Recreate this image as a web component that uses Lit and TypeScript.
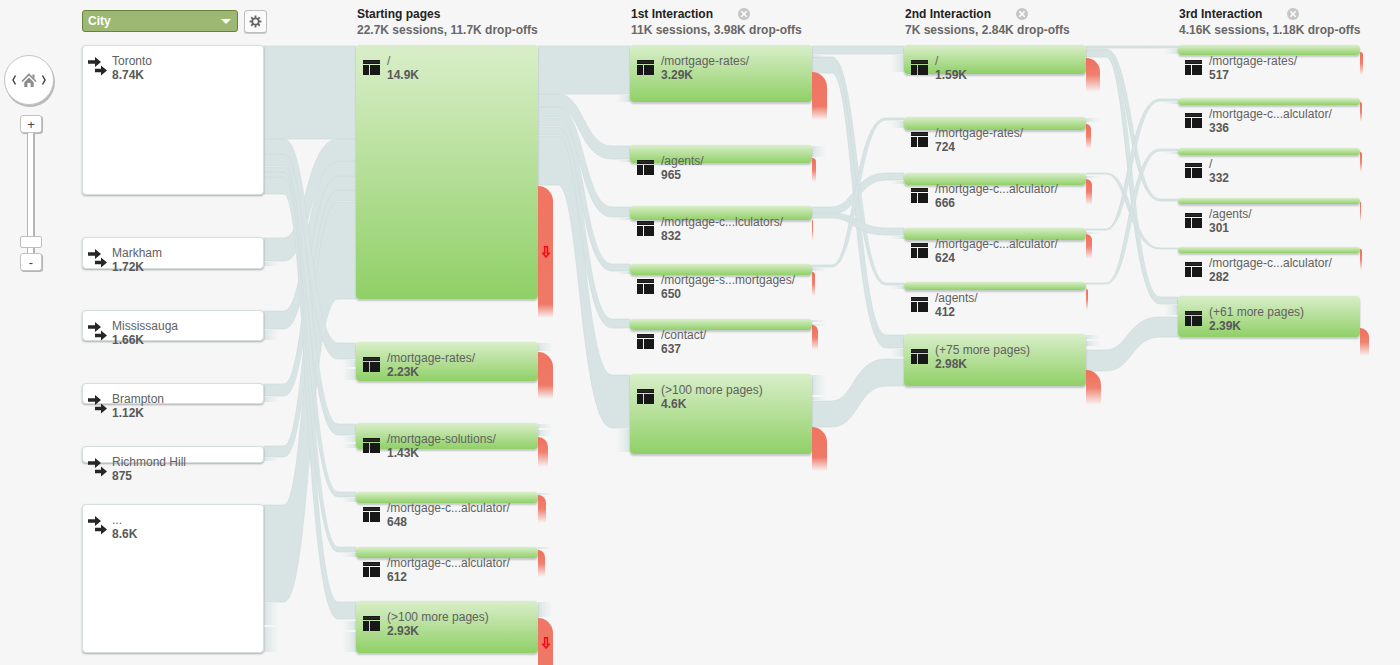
import { LitElement, html, css, svg } from "lit";
import { customElement, property } from "lit/decorators.js";
import { classMap } from "lit/directives/class-map.js";
import { styleMap } from "lit/directives/style-map.js";

interface FlowNode {
  label: string;
  value: string;
  top: number;
  height: number;
  /** Drop-off tail: [top, height, width], on the canvas scale. */
  drop?: [number, number, number];
  marked?: boolean;
  /** The tail runs on past the bottom of the canvas. */
  cut?: boolean;
}

interface Step {
  title: string;
  summary: string;
  removable: boolean;
  nodes: FlowNode[];
}

/** [source column, y and thickness at the source, y and thickness at the target] */
type Link = [number, number, number, number, number];

const COLUMN_WIDTH = 182;
const COLUMN_PITCH = 274;

const CITIES: FlowNode[] = [
  { label: "Toronto", value: "8.74K", top: 0, height: 150 },
  { label: "Markham", value: "1.72K", top: 192, height: 32 },
  { label: "Mississauga", value: "1.66K", top: 265, height: 31 },
  { label: "Brampton", value: "1.12K", top: 338, height: 21 },
  { label: "Richmond Hill", value: "875", top: 401, height: 17 },
  { label: "...", value: "8.6K", top: 459, height: 149 },
];

const STEPS: Step[] = [
  {
    title: "Starting pages",
    summary: "22.7K sessions, 11.7K drop-offs",
    removable: false,
    nodes: [
      { label: "/", value: "14.9K", top: 0, height: 254, drop: [141, 132, 15], marked: true },
      { label: "/mortgage-rates/", value: "2.23K", top: 297, height: 39, drop: [307, 47, 15] },
      { label: "/mortgage-solutions/", value: "1.43K", top: 378, height: 26, drop: [392, 30, 10] },
      { label: "/mortgage-c...alculator/", value: "648", top: 447, height: 11, drop: [450, 28, 8] },
      { label: "/mortgage-c...alculator/", value: "612", top: 502, height: 11, drop: [505, 27, 7] },
      { label: "(>100 more pages)", value: "2.93K", top: 556, height: 52, drop: [573, 49, 15], marked: true, cut: true },
    ],
  },
  {
    title: "1st Interaction",
    summary: "11K sessions, 3.98K drop-offs",
    removable: true,
    nodes: [
      { label: "/mortgage-rates/", value: "3.29K", top: 0, height: 57, drop: [27, 48, 15] },
      { label: "/agents/", value: "965", top: 100, height: 18, drop: [113, 24, 4] },
      { label: "/mortgage-c...lculators/", value: "832", top: 161, height: 14, drop: [175, 21, 1] },
      { label: "/mortgage-s...mortgages/", value: "650", top: 219, height: 11, drop: [227, 24, 3] },
      { label: "/contact/", value: "637", top: 274, height: 11, drop: [280, 25, 6] },
      { label: "(>100 more pages)", value: "4.6K", top: 329, height: 80, drop: [382, 44, 15] },
    ],
  },
  {
    title: "2nd Interaction",
    summary: "7K sessions, 2.84K drop-offs",
    removable: true,
    nodes: [
      { label: "/", value: "1.59K", top: 0, height: 29, drop: [13, 34, 14] },
      { label: "/mortgage-rates/", value: "724", top: 72, height: 13, drop: [79, 25, 5] },
      { label: "/mortgage-c...alculator/", value: "666", top: 128, height: 12, drop: [134, 26, 6] },
      { label: "/mortgage-c...alculator/", value: "624", top: 183, height: 12, drop: [189, 25, 6] },
      { label: "/agents/", value: "412", top: 237, height: 8, drop: [244, 21, 2] },
      { label: "(+75 more pages)", value: "2.98K", top: 289, height: 52, drop: [325, 35, 15] },
    ],
  },
  {
    title: "3rd Interaction",
    summary: "4.16K sessions, 1.18K drop-offs",
    removable: true,
    nodes: [
      { label: "/mortgage-rates/", value: "517", top: 0, height: 10, drop: [7, 23, 3] },
      { label: "/mortgage-c...alculator/", value: "336", top: 53, height: 7, drop: [57, 20, 2] },
      { label: "/", value: "332", top: 103, height: 7, drop: [107, 20, 2] },
      { label: "/agents/", value: "301", top: 153, height: 6, drop: [157, 20, 1] },
      { label: "/mortgage-c...alculator/", value: "282", top: 202, height: 6, drop: [204, 21, 2] },
      { label: "(+61 more pages)", value: "2.39K", top: 251, height: 41, drop: [283, 28, 9] },
    ],
  },
];

const LINKS: Link[] = [
  [0, 460, 97, 157, 97],
  [0, 401, 11, 145, 11],
  [0, 339, 12, 131, 14],
  [0, 266, 18, 116, 15],
  [0, 193, 23, 94, 22],
  [0, 132, 17, 557, 17],
  [0, 127, 5, 502, 5],
  [0, 122, 5, 447, 5],
  [0, 109, 12, 379, 11],
  [0, 94, 15, 298, 16],
  [0, 1, 93, 1, 93],
  [1, 91, 49, 330, 53],
  [1, 82, 8, 274, 9],
  [1, 73, 8, 219, 7],
  [1, 62, 10, 162, 10],
  [1, 49, 13, 101, 13],
  [1, 1, 48, 1, 48],
  [2, 15, 13, 290, 13],
  [2, 12, 2, 238, 2],
  [2, 1, 8, 1, 8],
  [2, 162, 7, 128, 7],
  [2, 168, 5, 183, 7],
  [2, 220, 2, 73, 2],
  [2, 356, 26, 314, 27],
  [3, 5, 7, 252, 7],
  [3, 4, 2, 154, 2],
  [3, 1, 2, 1, 2],
  [3, 128, 1, 203, 1],
  [3, 184, 1, 54, 2],
  [3, 238, 1, 104, 2],
  [3, 305, 21, 272, 20],
];

/** Stubs of traffic that leaves a column: [column, y, height]. */
const OUT_STUBS: [number, number, number][] = [
  [0, 217, 4], [0, 285, 10], [0, 352, 5], [0, 413, 3], [0, 558, 22], [0, 582, 25],
  [1, 298, 8], [1, 379, 4], [1, 385, 6], [1, 448, 2], [1, 502, 2], [1, 557, 15],
  [2, 10, 3], [2, 101, 11], [2, 223, 3], [2, 275, 2], [2, 279, 2], [2, 330, 20], [2, 352, 3],
  [3, 73, 4], [3, 131, 2], [3, 187, 2], [3, 290, 4], [3, 296, 5],
];

/** Stubs of traffic that arrives at a column: [column, y, height]. */
const IN_STUBS: [number, number, number][] = [
  [1, 315, 7], [1, 324, 11], [1, 391, 6], [1, 399, 4], [1, 453, 4], [1, 508, 4], [1, 576, 9], [1, 587, 20],
  [2, 50, 7], [2, 115, 2], [2, 173, 2], [2, 227, 2], [2, 384, 23],
  [3, 10, 17], [3, 76, 7], [3, 136, 3], [3, 191, 3], [3, 241, 3], [3, 304, 8],
  [4, 4, 5], [4, 57, 2], [4, 107, 2], [4, 260, 10],
];

const bandPath = ([column, y0, h0, y1, h1]: Link) => {
  const from = column * COLUMN_PITCH + COLUMN_WIDTH;
  const to = (column + 1) * COLUMN_PITCH;
  const a = from + 20;
  const b = to - 18;
  // The inner edge of a bend turns earlier than the outer one, which keeps the band wide on its slope.
  const down = y1 > y0;
  const upper = a + (b - a) * (down ? 0.48 : 0.4);
  const lower = a + (b - a) * (down ? 0.4 : 0.48);
  return (
    `M${from} ${y0}H${a}C${upper} ${y0} ${upper} ${y1} ${b} ${y1}H${to}` +
    `V${y1 + h1}H${b}C${lower} ${y1 + h1} ${lower} ${y0 + h0} ${a} ${y0 + h0}H${from}Z`
  );
};

@customElement("flow-links")
class FlowLinks extends LitElement {
  static styles = css`
    :host {
      display: block;
    }
    .links {
      display: block;
      overflow: visible;
    }
    .band {
      fill: #d8e4e4;
      stroke: #cedddc;
      stroke-opacity: 0.7;
      stroke-width: 1;
    }
  `;

  render() {
    return html`
      <svg class="links" width="1278" height="620" viewBox="0 0 1278 620" aria-hidden="true">
        <defs>
          <linearGradient id="leave">
            <stop offset="0" stop-color="#c9dbdb" stop-opacity="0.7" />
            <stop offset="1" stop-color="#d8e4e4" stop-opacity="0" />
          </linearGradient>
          <linearGradient id="arrive">
            <stop offset="0" stop-color="#d8e4e4" stop-opacity="0" />
            <stop offset="1" stop-color="#c9dbdb" stop-opacity="0.7" />
          </linearGradient>
        </defs>
        ${LINKS.map((link) => svg`<path class="band" d=${bandPath(link)} />`)}
        ${OUT_STUBS.map(
          ([c, y, h]) => svg`<rect x=${c * COLUMN_PITCH + COLUMN_WIDTH} y=${y} width="15" height=${h} fill="url(#leave)" />`
        )}
        ${IN_STUBS.map(
          ([c, y, h]) => svg`<rect x=${c * COLUMN_PITCH - 14} y=${y} width="14" height=${h} fill="url(#arrive)" />`
        )}
      </svg>
    `;
  }
}

@customElement("flow-column")
class FlowColumn extends LitElement {
  @property({ attribute: false }) nodes: FlowNode[] = [];
  @property() kind: "source" | "page" = "page";

  static styles = css`
    :host {
      display: block;
      position: relative;
    }
    .node {
      position: absolute;
      left: 0;
      width: 100%;
      box-sizing: border-box;
      border-radius: 4px;
    }
    .page {
      background: linear-gradient(#d9eec9, #90d067);
      box-shadow: 0 0 1px #c3d6cb, 0 2px 2px rgba(60, 80, 70, 0.28);
    }
    .source {
      border: 1px solid #d6dfde;
      background: #fff;
      box-shadow: 0 1px 2px rgba(0, 0, 0, 0.3);
    }
    .content {
      display: flex;
      gap: 7px;
      padding: 9px 0 0 7px;
      white-space: nowrap;
    }
    .source .content {
      gap: 5px;
      padding: 8px 0 0 4px;
    }
    .icon {
      flex: none;
      width: 17px;
      height: 15px;
      padding-top: 6px;
    }
    .source .icon {
      width: 20px;
      height: 20px;
      padding-top: 3px;
    }
    .text {
      font-size: 12px;
      line-height: 14px;
      color: #616161;
    }
    .value {
      display: block;
      color: #595959;
    }
    .drop {
      position: absolute;
      left: 100%;
      display: flex;
      align-items: center;
      justify-content: center;
      background: linear-gradient(#f07562, #ef7866 calc(100% - 14px), rgba(240, 120, 102, 0));
    }
    .faded {
      background: linear-gradient(#ee6f5c, #f1806f 50%, rgba(240, 120, 102, 0));
    }
    .cut {
      background: #ef7765;
    }
    .arrow {
      width: 8px;
      height: 12px;
      flex: none;
    }
  `;

  private icon() {
    return this.kind === "source"
      ? html`<svg class="icon" viewBox="0 0 20 20" fill="#262626" aria-hidden="true">
          <path d="M1 3.300h7V0l6 5-6 5V6.700H1zM8 11.800h6V8.500l6 5-6 5v-3.300H8z" />
        </svg>`
      : html`<svg class="icon" viewBox="0 0 17 15" fill="#181818" aria-hidden="true">
          <path d="M0 0h17v4H0zM0 5h6v10H0zM7 5h10v10H7z" />
          <path d="M0 2h17" stroke="#4a4a4a" stroke-width=".6" />
        </svg>`;
  }

  private tail(node: FlowNode) {
    if (!node.drop) return null;
    const [top, height, width] = node.drop;
    return html`<div
      class=${classMap({ drop: true, faded: height < 40, cut: !!node.cut })}
      style=${styleMap({
        top: `${top - node.top}px`,
        height: `${height}px`,
        width: `${width}px`,
        borderTopRightRadius: `${width}px`,
      })}
    >
      ${node.marked
        ? html`<svg class="arrow" viewBox="0 0 8 12" fill="none" stroke="#f40b12" stroke-width="1.500" aria-hidden="true">
            <path d="M2.600.8h2.800v6.400H7.200L4 11 .8 7.200h1.800z" />
          </svg>`
        : null}
    </div>`;
  }

  render() {
    return this.nodes.map(
      (node) => html`<div
        class=${classMap({ node: true, [this.kind]: true })}
        style=${styleMap({ top: `${node.top}px`, height: `${node.height}px` })}
      >
        <div class="content">
          ${this.icon()}
          <div class="text">${node.label}<b class="value">${node.value}</b></div>
        </div>
        ${this.tail(node)}
      </div>`
    );
  }
}

@customElement("flow-navigator")
class FlowNavigator extends LitElement {
  static styles = css`
    :host {
      display: flex;
      flex-direction: column;
      align-items: center;
      gap: 10px;
    }
    button {
      margin: 0;
      padding: 0;
      border: 0;
      background: none;
      color: #444;
      font: inherit;
    }
    .pan {
      display: flex;
      align-items: center;
      justify-content: center;
      gap: 4px;
      width: 50px;
      height: 50px;
      box-sizing: border-box;
      border: 1px solid #c4c4c4;
      border-radius: 50%;
      background: #fff;
      box-shadow: 1px 2px 0 #b9b9b9;
    }
    .side {
      width: 6px;
      height: 12px;
    }
    .home {
      width: 16px;
      height: 16px;
    }
    svg {
      display: block;
      width: 100%;
      height: 100%;
    }
    .zoom {
      display: flex;
      flex-direction: column;
      align-items: center;
      padding-left: 4px;
    }
    .key {
      width: 22px;
      height: 18px;
      box-sizing: border-box;
      border: 1px solid #c2c2c2;
      border-radius: 3px;
      background: #fff;
      box-shadow: 1px 1px 0 #b5b5b5;
      font-size: 13px;
      line-height: 15px;
    }
    .level {
      appearance: none;
      writing-mode: vertical-lr;
      direction: rtl;
      width: 22px;
      height: 120px;
      margin: 0;
      background: none;
    }
    .level::-webkit-slider-runnable-track {
      width: 8px;
      height: 100%;
      box-sizing: border-box;
      border: solid #b4b4b4;
      border-width: 0 2px 0 1px;
      background: #fff;
    }
    .level::-webkit-slider-thumb {
      appearance: none;
      width: 22px;
      height: 12px;
      margin-left: -8px;
      box-sizing: border-box;
      border: 1px solid #bdbdbd;
      border-radius: 2px;
      background: #fff;
    }
  `;

  render() {
    return html`
      <nav class="pan" aria-label="Pan">
        <button class="side" aria-label="Previous">
          <svg viewBox="0 0 6 12" fill="none" stroke="#444" stroke-width="1.500"><path d="M4.500 1.500 2 6l2.500 4.500" /></svg>
        </button>
        <button class="home" aria-label="Home">
          <svg viewBox="0 0 16 16" fill="none">
            <path d="M1 9.500 8 2.500l7 7" stroke="#8c8c8c" stroke-width="1.600" />
            <path d="M11.500 2.500h2v4.300l-2-2z" fill="#8c8c8c" />
            <path d="M3.300 10.200 8 5.500l4.700 4.700V15H9.600v-4H6.400v4H3.300z" fill="#8c8c8c" />
          </svg>
        </button>
        <button class="side" aria-label="Next">
          <svg viewBox="0 0 6 12" fill="none" stroke="#444" stroke-width="1.500"><path d="M1.500 1.500 4 6l-2.500 4.500" /></svg>
        </button>
      </nav>
      <div class="zoom">
        <button class="key" aria-label="Zoom in">+</button>
        <input class="level" type="range" min="0" max="100" value="5" aria-label="Zoom level" />
        <button class="key" aria-label="Zoom out">-</button>
      </div>
    `;
  }
}

@customElement("app-root")
class AppRoot extends LitElement {
  static styles = css`
    :host {
      display: grid;
      grid-template-columns: 82px minmax(0, 1fr);
      min-height: 100vh;
      background: #f6f6f6;
      font-family: "Liberation Sans", Arial, sans-serif;
      font-size: 12px;
      color: #222;
      overflow: hidden;
    }
    .side {
      padding: 55px 28px 0 4px;
    }
    .main {
      display: flex;
      flex-direction: column;
      min-width: 0;
    }
    .columns {
      display: grid;
      grid-template-columns: repeat(5, 182px);
      column-gap: 92px;
    }
    .heads {
      height: 45px;
    }
    .dimension {
      display: flex;
      align-items: flex-start;
      gap: 6px;
      padding-top: 10px;
    }
    .picker {
      position: relative;
      display: block;
      flex: none;
      width: 156px;
    }
    .picker::after {
      content: "";
      position: absolute;
      top: 9px;
      right: 7px;
      border: solid transparent;
      border-width: 5px 5px 0;
      border-top-color: #fff;
      pointer-events: none;
    }
    .select {
      appearance: none;
      display: block;
      width: 100%;
      height: 22px;
      padding: 0 20px 1px 5px;
      border: 1px solid #66823b;
      border-radius: 3px;
      background: #9cb873;
      color: #fff;
      font: bold 12px "Liberation Sans", Arial, sans-serif;
    }
    .gear {
      flex: none;
      display: grid;
      place-items: center;
      width: 23px;
      height: 23px;
      padding: 0;
      border: 1px solid #bdbdbd;
      border-radius: 3px;
      background: #fbfbfb;
      box-shadow: 0 1px 0 #ccc;
    }
    .head {
      padding: 6px 0 0 1px;
      white-space: nowrap;
    }
    .title {
      display: flex;
      align-items: center;
      gap: 25px;
      height: 16px;
    }
    h2 {
      margin: 0;
      font-size: 12px;
      line-height: 16px;
    }
    .summary {
      margin: 0;
      font-weight: bold;
      line-height: 17px;
      color: #686868;
    }
    .close {
      width: 12px;
      height: 12px;
      padding: 0;
      border: 0;
      background: none;
    }
    .close svg {
      display: block;
    }
    .stage {
      position: relative;
      flex: 1;
      min-height: 620px;
    }
    .backdrop {
      position: absolute;
      top: 0;
      left: 0;
    }
  `;

  private head(step: Step) {
    return html`<div class="head">
      <div class="title">
        <h2>${step.title}</h2>
        ${step.removable
          ? html`<button class="close" aria-label="Remove ${step.title}">
              <svg width="12" height="12" viewBox="0 0 12 12" aria-hidden="true">
                <circle cx="6" cy="6" r="6" fill="#c6c6c6" />
                <path d="m3.300 3.300 5.400 5.400m0-5.400L3.300 8.700" stroke="#fff" stroke-width="1.500" />
              </svg>
            </button>`
          : null}
      </div>
      <p class="summary">${step.summary}</p>
    </div>`;
  }

  render() {
    const teeth = [0, 45, 90, 135, 180, 225, 270, 315];
    return html`
      <flow-navigator class="side"></flow-navigator>
      <main class="main">
        <header class="columns heads">
          <div class="dimension">
            <label class="picker">
              <select class="select" aria-label="Dimension">
                <option>City</option>
              </select>
            </label>
            <button class="gear" aria-label="Settings">
              <svg width="13" height="13" viewBox="-6.500 -6.500 13 13" aria-hidden="true">
                <circle r="3.200" fill="none" stroke="#666" stroke-width="1.800" />
                ${teeth.map((a) => svg`<path d="M-.9-6h1.800v2.500h-1.800z" fill="#666" transform="rotate(${a})" />`)}
              </svg>
            </button>
          </div>
          ${STEPS.map((step) => this.head(step))}
        </header>
        <section class="stage" aria-label="Users flow">
          <flow-links class="backdrop"></flow-links>
          <div class="columns">
            <flow-column kind="source" .nodes=${CITIES}></flow-column>
            ${STEPS.map((step) => html`<flow-column .nodes=${step.nodes}></flow-column>`)}
          </div>
        </section>
      </main>
    `;
  }
}
